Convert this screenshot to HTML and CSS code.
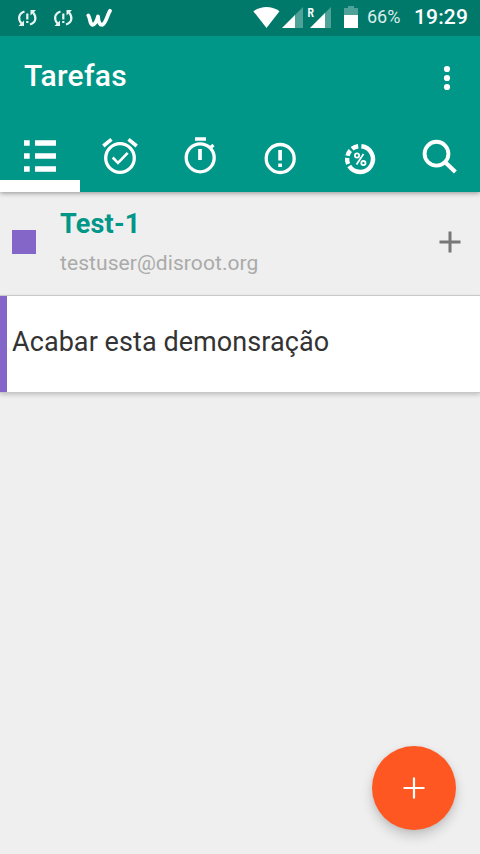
FILE: index.html
```html
<!DOCTYPE html>
<html lang="pt">
<head>
<meta charset="utf-8">
<title>Tarefas</title>
<link rel="stylesheet" href="styles.css">
</head>
<body>
<div class="screen">
  <div class="status">
    <svg class="notices" width="120" height="36" viewBox="0 0 120 36">
      <defs>
        <g id="sync">
          <path d="M24.500 11.500C18.500 13.500 17.500 19 21.500 23.500M30 24.500C36 22.500 37 17 33 12.500" fill="none" stroke="#e8f4f2" stroke-width="2.200"/>
          <path d="M18.500 26l5.500-5.500V26zM30.500 10H36l-5.500 5.500z" fill="#e8f4f2"/>
          <path d="M27.300 13.500v6M27.300 21v2" stroke="#e8f4f2" stroke-width="2.200"/>
        </g>
      </defs>
      <use href="#sync"/>
      <use href="#sync" x="36"/>
      <path d="M88.300 15.500C90.500 18 89.500 24 92.500 24.800C95.500 24.500 97 20 98 16.500C98.300 21 99 24.800 102 24.800C106 24 107 15 110 10.800" fill="none" stroke="#fff" stroke-width="3.800" stroke-linecap="round" stroke-linejoin="round"/>
    </svg>
    <div class="indicators">
      <svg width="106" height="36" viewBox="253 0 106 36">
        <path d="M253.300 11.200Q266.500 2.800 279.500 11.200L266.500 28z" fill="#fff"/>
        <path d="M303 7v21h-21zM331 7v21h-21z" fill="#4fa297"/>
        <path d="M295 15v13h-13zM325 13v15h-15z" fill="#fff"/>
        <text class="roaming" x="307.500" y="16.500" textLength="6.500" lengthAdjust="spacingAndGlyphs">R</text>
        <path d="M344 8h4V6h6v2h4v7h-14z" fill="#4fa297"/>
        <path d="M344 15h14v13h-14z" fill="#fff"/>
      </svg>
      <span class="percent">66%</span>
      <span class="clock">19:29</span>
    </div>
  </div>

  <header class="appbar">
    <div class="toolbar">
      <h1>Tarefas</h1>
      <svg width="10" height="28" viewBox="0 0 10 28" fill="#fff"><circle cx="5" cy="5" r="3.100"/><circle cx="5" cy="14" r="3.100"/><circle cx="5" cy="23" r="3.100"/></svg>
    </div>
    <nav class="tabs">
      <a class="tab active"><svg viewBox="0 0 80 72"><path d="M24 20.300h5.700v5.400H24zM35 20.300h21v5.400H35zM24 33.300h5.700v5.400H24zM35 33.300h21v5.400H35zM24 46.300h5.700v5.400H24zM35 46.300h21v5.400H35z" fill="#fff"/></svg></a>
      <a class="tab"><svg viewBox="0 0 80 72"><g class="line"><circle cx="40" cy="38" r="14.300"/><path d="M23.300 26l8.200-6.700M48.500 19.300l8.200 6.700" stroke-width="3.600"/><path d="M32.700 37.500l5.300 5.300 9.700-10" stroke-width="2.600"/></g></svg></a>
      <a class="tab"><svg viewBox="0 0 80 72"><g class="line"><circle cx="40.200" cy="37.800" r="14"/><path class="bar" d="M35 19h11M40 29v11"/><path class="knob" d="M49.500 28.500l4-3.500"/></g></svg></a>
      <a class="tab"><svg viewBox="0 0 80 72"><g class="line"><circle cx="40.200" cy="38.500" r="14"/><path class="bar" d="M40.100 30v10.500M40.100 43.500v3.500"/></g></svg></a>
      <a class="tab"><svg viewBox="0 0 80 72"><g class="line"><path class="ring" d="M41.350 26.200A12.900 12.900 0 1 1 29.200 46M28.100 44A12.900 12.900 0 0 1 27.150 37.900M27.500 35.700A12.900 12.900 0 0 1 30.300 30.500M32.050 28.800A12.900 12.900 0 0 1 38.200 26.200"/><g class="sign"><circle cx="37" cy="35.500" r="2.100"/><circle cx="43.400" cy="43.100" r="2.100"/><path d="M43.500 34l-7 10.600"/></g></g></svg></a>
      <a class="tab"><svg viewBox="0 0 80 72"><g class="line"><circle class="lens" cx="36.500" cy="33.700" r="11.900"/><path class="handle" d="M45.500 42.500L55.400 52"/></g></svg></a>
    </nav>
  </header>

  <section class="list-head">
    <span class="swatch"></span>
    <div class="names">
      <h2>Test-1</h2>
      <p>testuser@disroot.org</p>
    </div>
    <svg width="22" height="22" viewBox="0 0 22 22"><path d="M0.500 11h21M11 0.500v21" stroke="#777" stroke-width="3"/></svg>
  </section>

  <article class="task"><span class="title">Acabar esta demonsração</span></article>

  <button class="fab" aria-label="Adicionar"><svg width="22" height="22" viewBox="0 0 22 22"><path d="M0.500 11h21M11 0.500v21" stroke="#fff" stroke-width="2.200"/></svg></button>
</div>
</body>
</html>
```
FILE: styles.css
```css
* { box-sizing: border-box; }
body { margin: 0; font-family: Roboto, sans-serif; background: #efefef; }
h1, h2, p { margin: 0; }
svg { display: block; flex: none; }
.screen { position: relative; width: 480px; height: 854px; overflow: hidden; background: #efefef; }

.status { position: relative; z-index: 1; display: flex; justify-content: space-between; height: 36px; background: #00796b; color: #fff; }
.indicators { display: flex; height: 36px; padding-right: 12px; }
.roaming { font-size: 12px; font-weight: 700; fill: #fff; }
.percent { width: 34px; margin-left: 8px; font-size: 18px; line-height: 34px; color: #dcedea; white-space: nowrap; }
.clock { width: 54px; margin-left: 13px; font-size: 21px; font-weight: 500; line-height: 34px; letter-spacing: .15px; white-space: nowrap; }

.appbar { position: relative; height: 156px; background: #009688; color: #fff; box-shadow: 0 1px 5px rgba(0, 0, 0, .4); }
.toolbar { display: flex; justify-content: space-between; height: 84px; padding: 0 28px 0 24px; }
.toolbar svg { margin-top: 28px; }
h1 { font-size: 30px; font-weight: 500; line-height: 80px; letter-spacing: .25px; }
.tabs { display: grid; grid-template-columns: repeat(6, 80px); }
.tab { height: 72px; }
.tab svg { width: 80px; height: 72px; }
.tab.active { border-bottom: 12px solid #fff; }
.line { fill: none; stroke: #fff; stroke-width: 3.3px; }
.bar { stroke-width: 3.7px; }
.knob { stroke-width: 3.2px; }
.ring { stroke-width: 4.4px; }
.sign { stroke-width: 1.8px; }
.lens { stroke-width: 3.9px; }
.handle { stroke-width: 4.2px; }

.list-head { display: flex; height: 103px; padding: 0 19px 0 12px; }
.swatch { width: 24px; height: 24px; margin: 38px 24px 0 0; background: #8465c8; }
.names { flex: 1; padding-top: 14px; white-space: nowrap; }
h2 { font-size: 27px; font-weight: 700; line-height: 36px; letter-spacing: .2px; color: #009688; }
.names p { margin-top: 5px; font-size: 21px; line-height: 32px; letter-spacing: .07px; color: #aaa; }
.list-head svg { margin-top: 39px; }

.task { display: flex; height: 98px; border: solid #c8c8c8; border-width: 1px 0; background: #fff; box-shadow: 0 2px 4px rgba(0, 0, 0, .18); font-size: 27px; line-height: 92px; letter-spacing: .07px; color: #333; white-space: nowrap; }
.title { padding-left: 5px; border-left: 7px solid #8465c8; }

.fab { position: absolute; left: 372px; top: 746px; display: grid; place-items: center; width: 84px; height: 84px; padding: 0; border: 0; border-radius: 50%; background: #ff5722; box-shadow: 0 6px 12px rgba(0, 0, 0, .18), 0 1px 5px rgba(0, 0, 0, .06); }
```
